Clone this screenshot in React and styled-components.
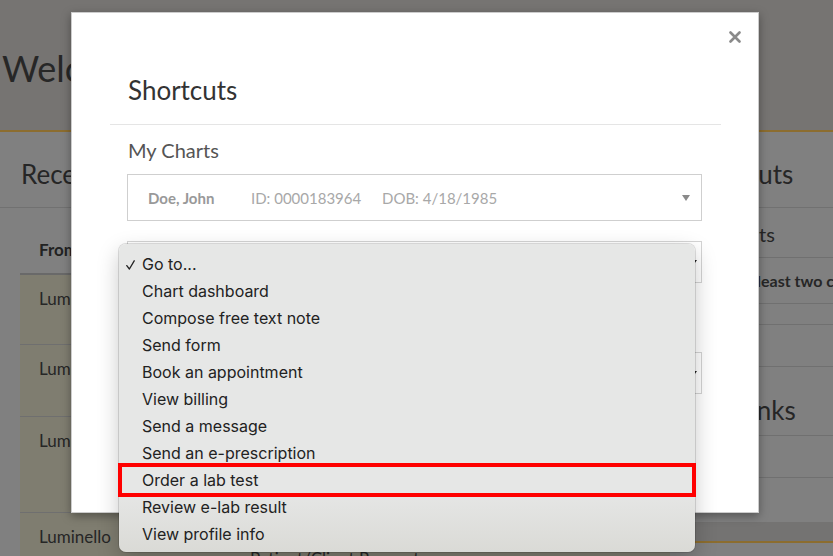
import React from 'react';
import styled, { createGlobalStyle } from 'styled-components';

const Global = createGlobalStyle`
  html, body { margin: 0; padding: 0; }
  body {
    width: 833px;
    height: 556px;
    overflow: hidden;
    background: #808080;
    font-family: Lato, "Open Sans", sans-serif;
  }
`;

const Stage = styled.div`
  position: relative;
  width: 833px;
  height: 556px;
  overflow: hidden;
  background: #808080;
`;

/* ---------- dimmed page behind the modal ---------- */
const TopBar = styled.header`
  box-sizing: border-box;
  height: 132px;
  padding: 47px 0 0 2px;
  background: #767472;
  border-bottom: 2px solid #8c6d2f;
`;

const Welcome = styled.h1`
  margin: 0;
  font-size: 36px;
  line-height: 42px;
  font-weight: 400;
  color: #272727;
  white-space: nowrap;
`;

const Columns = styled.div`
  display: flex;
  height: 424px;
`;

const MainCol = styled.section`
  flex: 0 0 670px;
  display: flex;
  flex-direction: column;
`;

const PanelTitle = styled.h2`
  margin: 0;
  padding: 27px 0 18px ${(p) => p.$pl || 21}px;
  font-size: 26px;
  line-height: 30px;
  font-weight: 400;
  color: #262626;
  border-bottom: 1px solid #717171;
  white-space: nowrap;
`;

const Table = styled.div`
  margin-left: 20px;
  display: flex;
  flex-direction: column;
`;

const HeadRow = styled.div`
  display: grid;
  grid-template-columns: 211px 1fr;
  padding: 32px 0 13px;
  border-bottom: 2px solid #696969;
`;

const HeadCell = styled.div`
  padding-left: 19px;
  font-size: 17px;
  line-height: 20px;
  font-weight: 700;
  color: #222;
`;

const Row = styled.div`
  box-sizing: border-box;
  display: grid;
  grid-template-columns: 211px 1fr;
  height: ${(p) => p.$h}px;
  padding-top: 13px;
  background: #7f7d70;
  border-bottom: 1px solid #6f6f6f;
  flex-shrink: 0;
`;

const Cell = styled.div`
  padding-left: 19px;
  font-size: 17px;
  line-height: 22px;
  color: #262626;
  white-space: nowrap;
`;

const SideCol = styled.aside`
  flex: 1;
  display: flex;
  flex-direction: column;
`;

const SideSection = styled.div`
  box-sizing: border-box;
  height: ${(p) => p.$h}px;
  padding: ${(p) => p.$pt || 0}px 0 0 14px;
  border-bottom: 1px solid #707070;
  font-size: ${(p) => p.$fs || 16}px;
  line-height: ${(p) => p.$lh || 22}px;
  font-weight: ${(p) => (p.$bold ? 700 : 400)};
  color: #262626;
  white-space: nowrap;
`;

const SideSpacer = styled.div`
  height: 44px;
`;

const SideBand = styled.div`
  height: 19px;
  background: #747372;
  border-bottom: 2px solid #8c6d2f;
`;

/* ---------- modal ---------- */
const Modal = styled.div`
  position: absolute;
  left: 71px;
  top: 12px;
  width: 688px;
  height: 501px;
  box-sizing: border-box;
  padding: 0 37px 0 38px;
  background: #fff;
  border: 1px solid rgba(0, 0, 0, 0.2);
  box-shadow: 0 3px 9px rgba(0, 0, 0, 0.35);
`;

const CloseButton = styled.button`
  position: absolute;
  top: 18px;
  right: 17px;
  width: 12px;
  height: 12px;
  padding: 0;
  border: 0;
  background: none;
  display: flex;
`;

const ModalHeader = styled.div`
  padding: 62px 0 19px 18px;
  border-bottom: 1px solid #e5e5e5;
`;

const ModalTitle = styled.h3`
  margin: 0;
  font-size: 26px;
  line-height: 30px;
  font-weight: 400;
  color: #333;
`;

const ModalBody = styled.div`
  padding: 0 19px 0 17px;
  display: flex;
  flex-direction: column;
`;

const SectionLabel = styled.div`
  margin-top: ${(p) => p.$mt}px;
  padding-left: 1px;
  font-size: 20px;
  line-height: 24px;
  color: #555;
`;

const PatientSelect = styled.div`
  box-sizing: border-box;
  margin-top: 12px;
  height: 47px;
  display: flex;
  align-items: center;
  padding: 0 11px 0 20px;
  border: 1px solid #cfcfcf;
  font-size: 15px;
  color: #a8a8a8;
`;

const Field = styled.span`
  flex: 0 0 ${(p) => (p.$w ? `${p.$w}px` : 'auto')};
  font-weight: ${(p) => (p.$bold ? 700 : 400)};
  color: ${(p) => (p.$bold ? '#999' : '#a8a8a8')};
  white-space: nowrap;
`;

const Caret = styled.svg`
  margin-left: auto;
  flex-shrink: 0;
`;

const NativeSelect = styled.div`
  box-sizing: border-box;
  margin-top: ${(p) => p.$mt}px;
  height: 42px;
  display: flex;
  align-items: center;
  padding: 0 4px 0 12px;
  border: 1px solid #d4d4d4;
  font-size: 15px;
  color: #333;
`;

/* ---------- native select popup ---------- */
const Menu = styled.ul`
  position: absolute;
  left: 119px;
  top: 244px;
  width: 576px;
  height: 308px;
  box-sizing: border-box;
  margin: 0;
  padding: 7px 0 4px;
  list-style: none;
  border-radius: 7px;
  background: linear-gradient(180deg, #e6e7e6 0%, #e6e7e6 80%, #dadad6 100%);
  box-shadow: 0 0 0 1px rgba(0, 0, 0, 0.12), 0 8px 22px rgba(0, 0, 0, 0.22);
  font-family: Inter, "Liberation Sans", sans-serif;
`;

const MenuItem = styled.li`
  position: relative;
  height: 27px;
  line-height: 27px;
  padding-left: 23px;
  font-size: 16px;
  color: #222;
  white-space: nowrap;

  ${(p) =>
    p.$highlight &&
    `
    &::after {
      content: '';
      position: absolute;
      top: -4px;
      bottom: -3px;
      left: -1px;
      right: -1px;
      border: 4px solid #ff0000;
    }
  `}
`;

const Check = styled.svg`
  position: absolute;
  left: 7px;
  top: 9px;
`;

const menuItems = [
  'Go to...',
  'Chart dashboard',
  'Compose free text note',
  'Send form',
  'Book an appointment',
  'View billing',
  'Send a message',
  'Send an e-prescription',
  'Order a lab test',
  'Review e-lab result',
  'View profile info',
];

const rows = [
  { h: 70, from: 'Luminello', subject: ['Appointment request'] },
  { h: 72, from: 'Luminello', subject: ['Form submitted'] },
  { h: 96, from: 'Luminello', subject: ['New message'] },
  { h: 60, from: 'Luminello', subject: ['New message from', 'Patient/Client Request'] },
];

export default function App() {
  return (
    <Stage>
      <Global />
      <TopBar>
        <Welcome>Welcome back, Dr. Smith</Welcome>
      </TopBar>
      <Columns>
        <MainCol>
          <PanelTitle>Recent Messages</PanelTitle>
          <Table>
            <HeadRow>
              <HeadCell>From</HeadCell>
              <HeadCell>Subject</HeadCell>
            </HeadRow>
            {rows.map((r, i) => (
              <Row key={i} $h={r.h}>
                <Cell>{r.from}</Cell>
                <Cell>
                  {r.subject.map((s) => (
                    <div key={s}>{s}</div>
                  ))}
                </Cell>
              </Row>
            ))}
          </Table>
        </MainCol>
        <SideCol>
          <PanelTitle $pl={14}>Shortcuts</PanelTitle>
          <SideSection $h={50} $pt={14} $fs={20} $lh={24}>My Charts</SideSection>
          <SideSection $h={46} $pt={12} $bold>Type in at least two characters</SideSection>
          <SideSection $h={21} />
          <SideSection $h={42} />
          <SideSection $h={69} $pt={28} $fs={26} $lh={30}>Web links</SideSection>
          <SideSection $h={42} />
          <SideSpacer />
          <SideBand />
        </SideCol>
      </Columns>

      <Modal role="dialog" aria-label="Shortcuts">
        <CloseButton aria-label="Close">
          <svg width="12" height="12" viewBox="0 0 12 12">
            <path d="M1.5 1.5 L10.5 10.5 M10.5 1.5 L1.5 10.5" stroke="#8a8a8a" strokeWidth="2.6" strokeLinecap="round" />
          </svg>
        </CloseButton>
        <ModalHeader>
          <ModalTitle>Shortcuts</ModalTitle>
        </ModalHeader>
        <ModalBody>
          <SectionLabel $mt={13}>My Charts</SectionLabel>
          <PatientSelect>
            <Field $w={103} $bold>Doe, John</Field>
            <Field $w={131}>ID: 0000183964</Field>
            <Field>DOB: 4/18/1985</Field>
            <Caret width="8" height="6" viewBox="0 0 8 6">
              <path d="M0 0 H8 L4 6 Z" fill="#8a8a8a" />
            </Caret>
          </PatientSelect>
          <NativeSelect $mt={20}>
            Go to...
            <Caret width="7" height="5" viewBox="0 0 7 5">
              <path d="M0 0 H7 L3.5 5 Z" fill="#222" />
            </Caret>
          </NativeSelect>
          <SectionLabel $mt={22}>Other charts</SectionLabel>
          <NativeSelect $mt={23}>
            Select a chart
            <Caret width="7" height="5" viewBox="0 0 7 5">
              <path d="M0 0 H7 L3.5 5 Z" fill="#222" />
            </Caret>
          </NativeSelect>
        </ModalBody>
      </Modal>

      <Menu role="listbox">
        {menuItems.map((item, i) => (
          <MenuItem key={item} role="option" aria-selected={i === 0} $highlight={item === 'Order a lab test'}>
            {i === 0 && (
              <Check width="9" height="10" viewBox="0 0 9 10">
                <path d="M0.8 5.6 L3.4 9 L8.2 0.8" fill="none" stroke="#222" strokeWidth="1.3" strokeLinecap="round" strokeLinejoin="round" />
              </Check>
            )}
            {item}
          </MenuItem>
        ))}
      </Menu>
    </Stage>
  );
}
